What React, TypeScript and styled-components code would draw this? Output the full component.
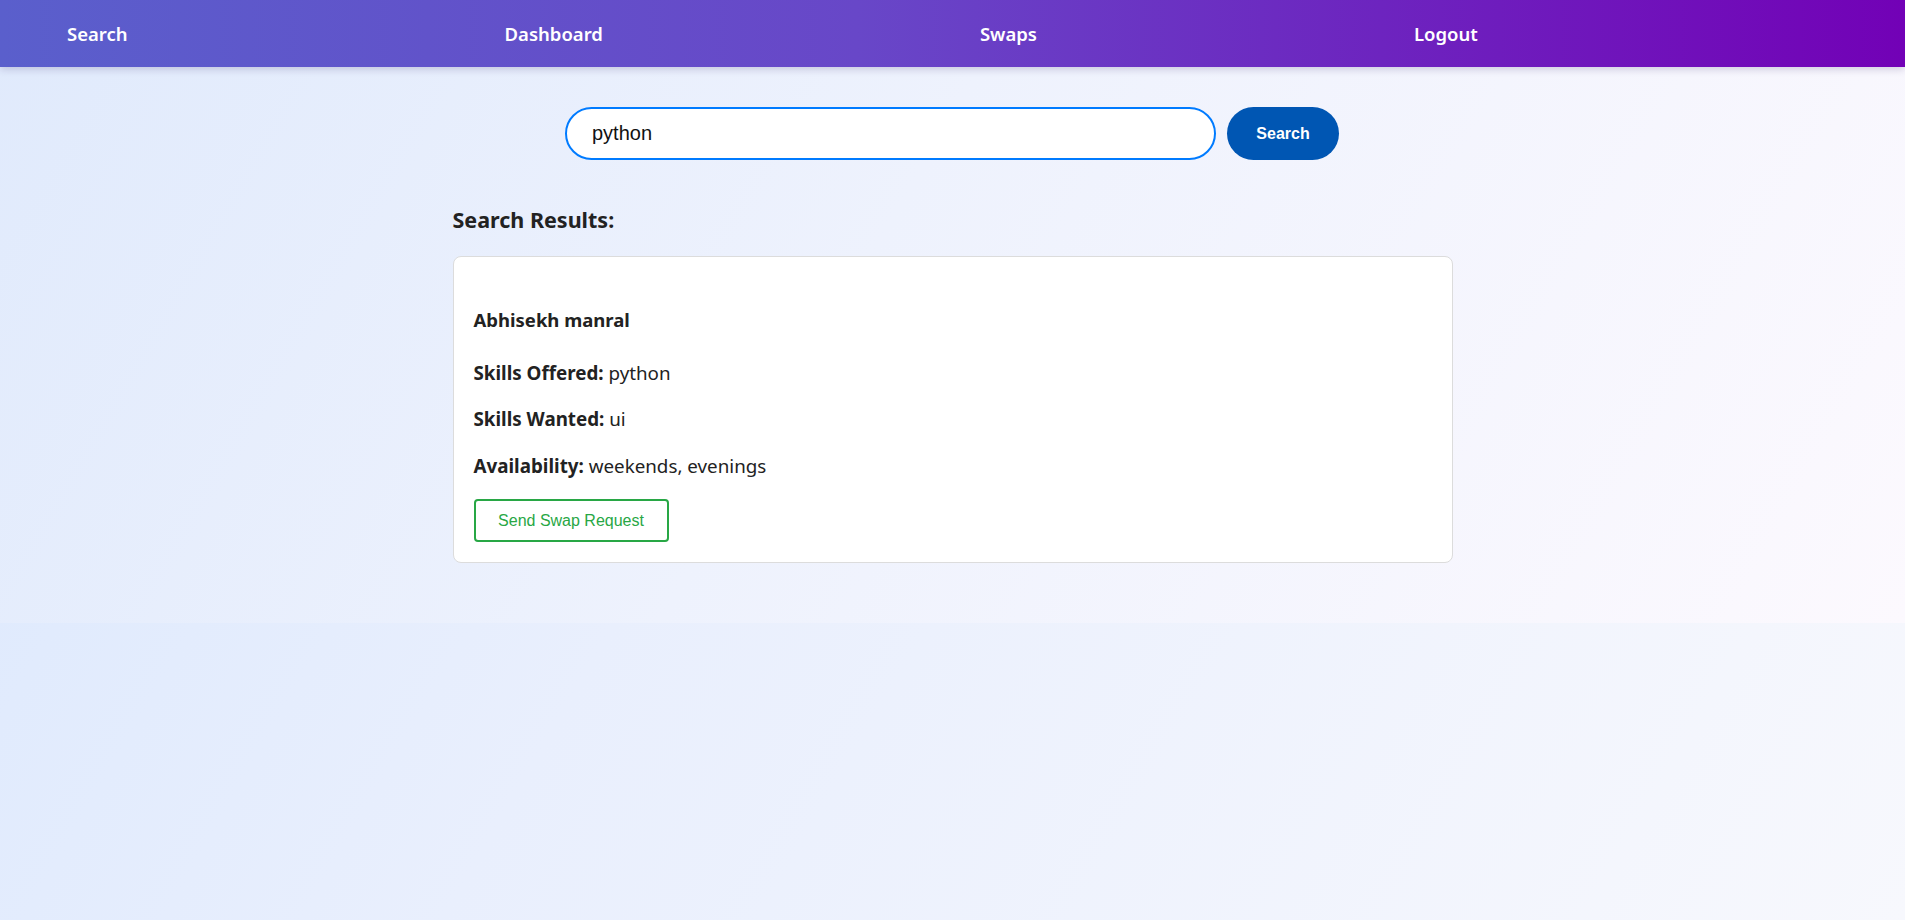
import React from "react";
import styled, { createGlobalStyle } from "styled-components";

const GlobalStyle = createGlobalStyle`
  html, body {
    margin: 0;
    padding: 0;
    min-height: 100%;
  }
  html {
    height: 100%;
  }
  body {
    min-height: 100vh;
    background: linear-gradient(120deg, #dbe8fd 0%, #e9effd 40%, #f7f8fd 100%);
    font-family: "Noto Sans", "Open Sans", sans-serif;
    color: #222;
  }
  * { box-sizing: border-box; }
`;

const AppShell = styled.div`
  background: linear-gradient(120deg, #e0eafc 0%, #eef2fd 45%, #fcf9fe 100%);
  padding-bottom: 60px;
`;

const NavBar = styled.nav`
  display: flex;
  align-items: center;
  gap: 377px;
  height: 67px;
  padding: 0 67px;
  background: linear-gradient(90deg, #5a5fcc 0%, #6847c8 45%, #7201b6 100%);
  box-shadow: 0 2px 8px rgba(40, 20, 90, 0.2);
  position: relative;
`;

const NavLink = styled.a`
  color: #ffffff;
  font-family: "Noto Sans", sans-serif;
  font-weight: 600;
  font-size: 18.5px;
  text-decoration: none;
  cursor: pointer;
`;

const Main = styled.main`
  padding-top: 40px;
`;

const SearchRow = styled.form`
  display: flex;
  justify-content: center;
  gap: 11px;
  padding-right: 1px;
`;

const SearchInput = styled.input`
  width: 651px;
  height: 53px;
  border: 2px solid #007bff;
  border-radius: 27px;
  padding: 0 25px;
  font-family: "Liberation Sans", Arial, sans-serif;
  font-size: 20px;
  color: #111;
  background: #fff;
  outline: none;
`;

const SearchButton = styled.button`
  width: 112px;
  height: 53px;
  border: none;
  border-radius: 27px;
  background: #0056b3;
  color: #fff;
  font-family: "Liberation Sans", Arial, sans-serif;
  font-weight: 700;
  font-size: 16px;
  cursor: pointer;
`;

const Results = styled.section`
  width: 1000px;
  margin: 0 auto;
`;

const ResultsTitle = styled.h2`
  margin: 46px 0 22px;
  font-size: 21.5px;
  line-height: 28px;
  font-weight: 700;
  color: #222;
`;

const Card = styled.div`
  background: #fff;
  border: 1px solid #dcdcdc;
  border-radius: 8px;
  padding: 20px;
  display: flex;
  flex-direction: column;
  align-items: flex-start;
`;

const UserName = styled.h3`
  margin: 31px 0 0;
  font-size: 18.5px;
  line-height: 24px;
  font-weight: 700;
  color: #222;
`;

const InfoLine = styled.p<{ $gap: number }>`
  margin: ${(p) => p.$gap}px 0 0;
  font-size: 18.8px;
  line-height: 24px;
  color: #222;

  strong {
    font-weight: 700;
  }
`;

const SwapButton = styled.button`
  margin-top: 21px;
  width: 195px;
  height: 43px;
  border: 2px solid #28a745;
  border-radius: 4px;
  background: #fff;
  color: #28a745;
  font-family: "Liberation Sans", Arial, sans-serif;
  font-size: 16px;
  cursor: pointer;
`;

const users = [
  {
    name: "Abhisekh manral",
    offered: "python",
    wanted: "ui",
    availability: "weekends, evenings",
  },
];

export default function App() {
  return (
    <>
      <GlobalStyle />
      <AppShell>
        <NavBar>
          <NavLink>Search</NavLink>
          <NavLink>Dashboard</NavLink>
          <NavLink>Swaps</NavLink>
          <NavLink>Logout</NavLink>
        </NavBar>
        <Main>
          <SearchRow onSubmit={(e) => e.preventDefault()}>
            <SearchInput defaultValue="python" />
            <SearchButton type="submit">Search</SearchButton>
          </SearchRow>
          <Results>
            <ResultsTitle>Search Results:</ResultsTitle>
            {users.map((u) => (
              <Card key={u.name}>
                <UserName>{u.name}</UserName>
                <InfoLine $gap={29}>
                  <strong>Skills Offered:</strong> {u.offered}
                </InfoLine>
                <InfoLine $gap={22}>
                  <strong>Skills Wanted:</strong> {u.wanted}
                </InfoLine>
                <InfoLine $gap={23}>
                  <strong>Availability:</strong> {u.availability}
                </InfoLine>
                <SwapButton>Send Swap Request</SwapButton>
              </Card>
            ))}
          </Results>
        </Main>
      </AppShell>
    </>
  );
}
